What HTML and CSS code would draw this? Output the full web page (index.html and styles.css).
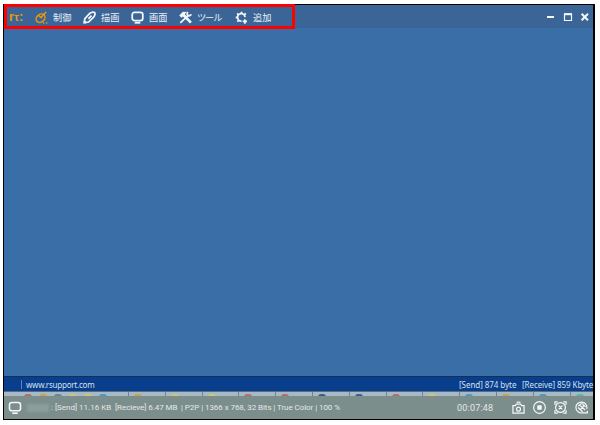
FILE: index.html
```
<!DOCTYPE html>
<html lang="ja">
<head>
<meta charset="utf-8">
<title>Remote viewer</title>
<link rel="stylesheet" href="styles.css">
</head>
<body>
<div class="window">
  <header class="toolbar">
    <span class="brand">r<span class="tau">τ</span>:</span>
    <nav class="menu">
      <div class="item control">
        <svg class="icon" viewBox="0 0 14 14"><ellipse cx="6" cy="7.8" rx="5.2" ry="4.1" transform="rotate(-40 6 7.8)"/><path d="M4 5 7.5 7.8M6.5 7 12 1"/><path class="dots" d="M8.5 13h1.5M11.8 13h1.5"/></svg><span>制御</span>
      </div>
      <div class="item draw">
        <svg class="icon" viewBox="0 0 14 14"><path d="M1.3 12.7 2 8.3 7.2 2.7Q10 .6 12.5 1.6 13.7 4.2 11.2 7L6 11.9Z"/><path d="M5.8 8.5 9.2 5M1 10.5 3.5 13"/></svg><span>描画</span>
      </div>
      <div class="item screen">
        <svg class="icon" viewBox="0 0 14 14"><rect x="1.3" y="1.6" width="11.4" height="8.8" rx="2.5"/><path d="M4 12.7h6"/></svg><span>画面</span>
      </div>
      <div class="item tools">
        <svg class="icon" viewBox="0 0 14 14"><path class="fill" d="M.2 4.8 4.2.8 8 1.2 6.3 3.5 13.8 11.5 11.8 13.5 4.3 6 2.8 7.2Z"/><path class="wrench" d="M1.4 12.8 10 4.6M9.3.8Q8 4.5 10 5 12.5 5.5 13.2 3.6"/></svg><span class="kana">ツール</span>
      </div>
      <div class="item add">
        <svg class="icon" viewBox="0 0 14 14"><path class="gear" d="M10.8 6.6A4 4 0 1 0 7 10.8"/><path class="teeth" d="M7 .8v2M2.3 2.5 4 4.2M.8 7h2M2.5 11.4 4.2 9.8M11.6 2.5 10 4.2"/><path d="M10.6 8.8v4.8M8.2 11.2H13"/></svg><span>追加</span>
      </div>
    </nav>
    <div class="controls">
      <svg viewBox="0 0 44 10"><path d="M1 5h7"/><path class="box" d="M18.5 2h7v6.5h-7z"/><path class="boxtop" d="M18 2.2h8"/><path d="m35.6 1.8 6.4 6.4m0-6.4-6.4 6.4"/></svg>
    </div>
  </header>
  <main class="desktop"></main>
  <div class="inner-status">
    <span class="url">www.rsupport.com</span>
    <span class="sent">[Send] 874 byte</span>
    <span class="received">[Receive] 859 Kbyte</span>
  </div>
  <div class="taskbar">
    <i class="start"><b class="red"></b><b class="gold"></b><b class="slate"></b><b class="yellow"></b><b class="yellow"></b><b class="blue"></b></i>
    <i><b class="gold"></b></i><i><b class="yellow"></b></i><i><b class="yellow"></b></i><i><b class="red"></b></i><i><b class="red"></b></i><i><b class="navy"></b></i><i><b class="navy"></b></i><i><b class="red"></b></i><i><b class="yellow"></b></i><i><b class="blue"></b></i><i><b class="gold"></b></i><i><b class="blue"></b></i><i class="end"><b class="teal"></b></i>
  </div>
  <footer class="status">
    <svg class="monitor" viewBox="0 0 14 14"><rect x="1.5" y="1.5" width="11" height="8.3" rx="2.3"/><path d="M4.2 12.2h5.6"/></svg>
    <span class="masked"></span>
    <span class="send">: [Send] 11.16 KB</span>
    <span class="recv">[Recieve] 6.47 MB</span>
    <span class="info">| P2P | 1366 x 768, 32 Bits | True Color | 100 %</span>
    <span class="time">00:07:48</span>
    <div class="actions">
      <svg viewBox="0 0 14 14"><path d="M1 5H3.5L4.7 3.3h4.6L10.5 5H13v8H1z"/><circle cx="7" cy="8.8" r="2.1"/><path d="M5 1.3h4"/></svg>
      <svg viewBox="0 0 14 14"><circle cx="7" cy="7" r="6.3"/><rect class="solid" x="4.6" y="4.6" width="4.8" height="4.8" rx=".5"/></svg>
      <svg viewBox="0 0 14 14"><circle cx="7" cy="7" r="5.3"/><path d="M1 4V1h3M10 1h3v3M13 10v3h-3M4 13H1v-3M5 5l4 4m0-4L5 9"/></svg>
      <svg viewBox="0 0 14 14"><path d="M12.6 8.5A5.9 5.9 0 1 0 8 12.8h5.3V10.5"/><path d="m3.2 7 5 4.5M5 4.5l6 5.2M7.5 2.8l4 3.5M3.5 5.5 7 2.5M6 9l4-4.5"/></svg>
    </div>
  </footer>
  <div class="highlight"></div>
</div>
</body>
</html>
```
FILE: styles.css
```
* { box-sizing: border-box; }
body { margin: 0; background: #fff; font-family: "Liberation Sans", "Noto Sans CJK JP", sans-serif; }
.window {
  position: relative;
  display: flex;
  flex-direction: column;
  width: 592px;
  height: 416px;
  margin: 4px 0 0 3px;
  border: 1px solid #000;
  border-right-width: 2px;
  background: #3a6ea8;
}
svg { fill: none; stroke: #f4f7fa; stroke-width: 1.6; display: block; flex: none; }
.toolbar {
  display: flex;
  align-items: center;
  height: 23px;
  flex: none;
  padding: 2px 3px 0 5px;
  background: #3a6596;
  border-bottom: 1px solid #376494;
}
.brand { width: 26px; color: #e7980c; font-size: 13px; font-weight: bold; line-height: 14px; white-space: nowrap; }
.tau { font-size: 11px; }
.menu { display: flex; flex: 1; }
.item { display: flex; align-items: center; gap: 5px; height: 16px; color: #edf2f7; font: 9.2px/14px "Noto Sans CJK JP", sans-serif; white-space: nowrap; }
.icon { width: 13px; height: 13px; stroke-width: 1.9; }
.control { width: 48px; }
.control .icon { stroke: #e7980c; stroke-width: 1.6; }
.draw { width: 48px; }
.screen { width: 48px; }
.tools { width: 56px; }
.tools .fill { fill: #f4f7fa; stroke: none; }
.kana { letter-spacing: -1.1px; }
.teeth { stroke-width: 2; }
.controls svg { width: 44px; height: 10px; stroke-width: 2; }
.controls .box { stroke-width: 1.2; }
.desktop { flex: 1; background: #3a6ea7; }
.inner-status {
  display: flex;
  align-items: center;
  height: 15px;
  flex: none;
  background: #083e8c;
  border-top: 1px solid #152f55;
  color: #d4e0ef;
  font: 8px/13px "Noto Sans", sans-serif;
  letter-spacing: -.05px;
  white-space: nowrap;
}
.url { flex: 1; margin-left: 17px; padding-left: 5px; background: linear-gradient(#6482b3, #6482b3) 0 50% / 1px 9px no-repeat; letter-spacing: -.22px; }
.sent { width: 63px; }
.received { width: 71px; letter-spacing: -.08px; }
.taskbar { display: flex; height: 5px; flex: none; background: #a5bac4; border-top: 1px solid #596d82; overflow: hidden; }
.taskbar i { display: flex; width: 36.8px; padding: 2px 0 0 5px; border-left: 1px solid #70838e; flex: none; }
.taskbar .start { width: 124px; padding-left: 20px; gap: 7px; border: 0; }
.taskbar .end { flex: 1; }
.taskbar b { width: 8px; height: 3px; border-radius: 3px 3px 0 0; }
.red { background: #b66c67; }
.gold { background: #d39e45; }
.slate { background: #66849a; }
.yellow { background: #d1c477; }
.blue { background: #4d99c5; }
.teal { background: #5cb4ac; }
.navy { background: #385f93; }
.status {
  display: flex;
  align-items: center;
  height: 23px;
  flex: none;
  background: #7b8e8b;
  color: #e3e9e7;
  font: 8px/12px Roboto, sans-serif;
  white-space: nowrap;
}
.monitor { width: 14px; height: 14px; margin-left: 4px; }
.masked { width: 22px; height: 8px; margin: 0 0 0 5px; background: #8d9d9a; filter: blur(1.5px); }
.send { width: 64px; letter-spacing: 0; margin-left: 2px; }
.recv { width: 66px; letter-spacing: -.05px; }
.info { flex: 1; letter-spacing: -.06px; }
.time { width: 55px; font-size: 9px; letter-spacing: .2px; }
.actions { display: flex; gap: 8px; margin-right: 5px; }
.actions svg { width: 13px; height: 13px; stroke-width: 1.3; }
.actions .solid { fill: #f4f7fa; stroke: none; }
.highlight { position: absolute; left: 0; top: -1px; width: 291px; height: 25px; border: 3px solid #f00; }
```
